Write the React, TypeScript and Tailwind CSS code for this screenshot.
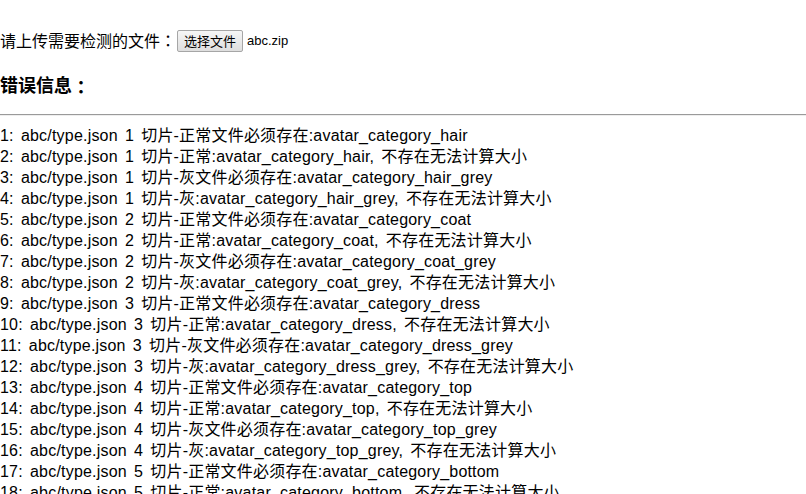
import React from 'react';

const categories = ['hair', 'coat', 'dress', 'top', 'bottom'];

function buildErrors() {
  const lines: string[] = [];
  categories.forEach((c, idx) => {
    const n = idx + 1;
    lines.push(`abc/type.json ${n} 切片-正常文件必须存在:avatar_category_${c}`);
    lines.push(`abc/type.json ${n} 切片-正常:avatar_category_${c}, 不存在无法计算大小`);
    lines.push(`abc/type.json ${n} 切片-灰文件必须存在:avatar_category_${c}_grey`);
    lines.push(`abc/type.json ${n} 切片-灰:avatar_category_${c}_grey, 不存在无法计算大小`);
  });
  return lines;
}

export default function App() {
  const errors = buildErrors();

  return (
    <div className="w-[806px] h-[494px] overflow-hidden bg-white text-black font-['Liberation_Sans','Noto_Sans_CJK_SC',sans-serif]">
      {/* Upload */}
      <div className="pt-[30px] flex items-center h-[52px] text-[16px]">
        <span>
          请上传需要检测的文件<span className="font-['Noto_Sans_CJK_JP',sans-serif]">：</span>
        </span>
        <button className="ml-[1px] h-[22px] px-[6px] text-[13px] leading-none border border-[#a6a6a6] rounded-[2px] bg-gradient-to-b from-[#f6f6f6] to-[#dedede] text-black">
          选择文件
        </button>
        <span className="ml-[4px] text-[13px]">abc.zip</span>
      </div>

      {/* Errors */}
      <h3 className="mt-[23px] h-[22px] flex items-center text-[18px] font-bold leading-[22px]">
        <span>错误信息</span>
        <span className="font-['Noto_Sans_CJK_JP',sans-serif]">：</span>
      </h3>
      <hr className="mt-[17px] border-t border-[#9a9a9a] border-b border-b-[#eeeeee]" />

      <div className="mt-[9px] text-[16px] leading-[21px] tracking-[0.2px] [word-spacing:2.5px]">
        {errors.map((line, i) => (
          <div key={i} className="whitespace-nowrap">
            {i + 1}: {line}
          </div>
        ))}
      </div>
    </div>
  );
}
